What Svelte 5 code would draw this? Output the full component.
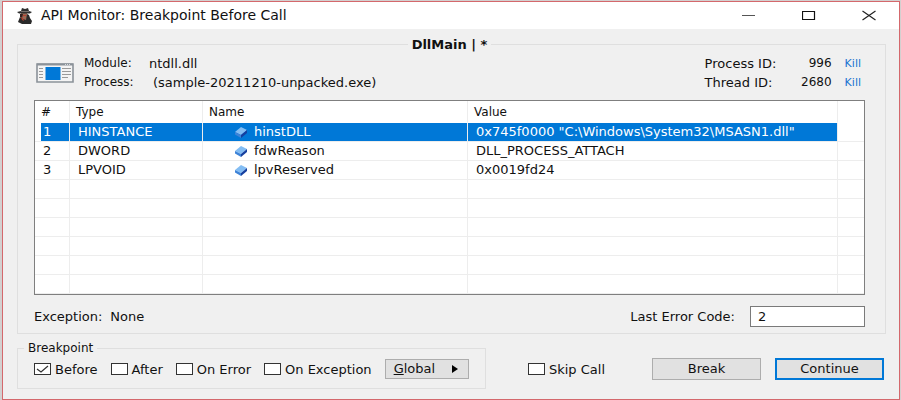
<script>
  const rows = [
    { type: 'HINSTANCE', name: 'hinstDLL', value: '0x745f0000 "C:\\Windows\\System32\\MSASN1.dll"' },
    { type: 'DWORD', name: 'fdwReason', value: 'DLL_PROCESS_ATTACH' },
    { type: 'LPVOID', name: 'lpvReserved', value: '0x0019fd24' }
  ];
  const blanks = Array(6).fill(0);
  let selected = $state(0);
  let points = $state([
    { label: 'Before', on: true },
    { label: 'After', on: false },
    { label: 'On Error', on: false },
    { label: 'On Exception', on: false }
  ]);
  let skip = $state(false);
  let code = $state('2');
</script>

<div class="desktop">
  <div class="window">
    <header>
      <svg class="agent" width="16" height="16" viewBox="0 0 16 16" aria-hidden="true">
        <path d="M4 5h6l1 4-2 4-5-2z" fill="#9a6a55" />
        <path d="M3 6l3 0-1 4-2-1z" fill="#33211f" />
        <path d="M0 4l4-1 1-3 3 1 3-1 1 3 3 1-2 1.500H2z" fill="#303030" />
        <path d="M4 3h8v1H4z" fill="#77716d" />
        <path d="M3 9l3 2 3 1 1-6 2 1 1 3 2 3-1 3H5l-4-2z" fill="#2a2a2a" />
        <path d="M4 9l2 1 1 3-2-1zM6 7h3v1H6z" fill="#b5402f" />
      </svg>
      <h1>API Monitor: Breakpoint Before Call</h1>
      <div class="controls">
        <button aria-label="Minimize"><svg width="14" height="12" viewBox="0 0 14 12"><path d="M0 5.500h13" stroke="#555" /></svg></button>
        <button aria-label="Maximize"><svg width="14" height="12" viewBox="0 0 14 12"><path d="M.5 1.500h12v8H.5z" fill="none" stroke="#111" stroke-width="1.200" /></svg></button>
        <button aria-label="Close"><svg width="14" height="12" viewBox="0 0 14 12"><path d="M.5 1l13 9M13.500 1l-13 9" fill="none" stroke="#222" stroke-width="1.200" /></svg></button>
      </div>
    </header>

    <main>
      <fieldset class="call">
        <legend>DllMain | *</legend>
        <div class="info">
          <svg width="38" height="20" viewBox="0 0 38 20" aria-hidden="true">
            <path d="M1 1h36v18H1z" fill="#f4f4f4" stroke="#8b9299" stroke-width="1.600" />
            <path d="M1 1.500h36" stroke="#8b9299" stroke-width="2" />
            <path d="M29 1.500h6" stroke="#d8dcdf" stroke-dasharray="1 1" />
            <path d="M9.500 4h15v13h-15z" fill="#0078d7" />
            <path d="M3 5.500h4M3 8.500h4M3 11.500h4M3 14.500h4M26 5.500h9M26 8.500h9M26 11.500h9M26 14.500h6" stroke="#9a9a9a" />
          </svg>
          <dl class="source">
            <dt>Module:</dt><dd>ntdll.dll</dd>
            <dt>Process:</dt><dd class="inset">(sample-20211210-unpacked.exe)</dd>
          </dl>
          <dl class="ids">
            <dt>Process ID:</dt><dd>996</dd><dd><a href="#process">Kill</a></dd>
            <dt>Thread ID:</dt><dd>2680</dd><dd><a href="#thread">Kill</a></dd>
          </dl>
        </div>

        <div class="list">
          <table>
            <colgroup><col class="c-num" /><col class="c-type" /><col class="c-name" /><col /><col class="c-end" /></colgroup>
            <thead>
              <tr><th>#</th><th>Type</th><th>Name</th><th>Value</th><th></th></tr>
            </thead>
            <tbody>
              {#each rows as row, i}
                <tr class:selected={i === selected} onclick={() => (selected = i)}>
                  <td>{i + 1}</td>
                  <td>{row.type}</td>
                  <td class="name">
                    <div>
                      <svg width="12" height="12" viewBox="0 0 12 12" aria-hidden="true">
                        <path d="M0 6l6-5 6 3-6 5z" fill="#83bdf3" />
                        <path d="M0 6l6 3v3L0 8.500z" fill="#3d83d8" />
                        <path d="M6 9l6-5v3l-6 5z" fill="#153f9f" />
                      </svg>
                      {row.name}
                    </div>
                  </td>
                  <td>{row.value}</td>
                  <td></td>
                </tr>
              {/each}
              {#each blanks as _}
                <tr><td></td><td></td><td></td><td></td><td></td></tr>
              {/each}
            </tbody>
          </table>
        </div>

        <div class="status">
          <span>Exception:</span><span>None</span>
          <label for="code">Last Error Code:</label>
          <input id="code" type="text" bind:value={code} />
        </div>
      </fieldset>

      <div class="footer">
        <fieldset class="points">
          <legend>Breakpoint</legend>
          <div class="checks">
            {#each points as point}
              <label><input type="checkbox" bind:checked={point.on} />{point.label}</label>
            {/each}
            <button class="push global"><span><u>G</u>lobal</span>
              <svg width="6" height="8" viewBox="0 0 6 8" aria-hidden="true"><path d="M0 0l6 4-6 4z" /></svg>
            </button>
          </div>
        </fieldset>
        <div class="actions">
          <label><input type="checkbox" bind:checked={skip} />Skip Call</label>
          <button class="push wide">Break</button>
          <button class="push wide primary">Continue</button>
        </div>
      </div>
    </main>
  </div>
</div>

<style>
  .desktop {
    box-sizing: border-box;
    padding: 1px 1px 0 2px;
    background: #d3d0d0;
    font: 13px/19px "DejaVu Sans", sans-serif;
    color: #111;
  }
  .window {
    border: 1px solid #d4686c;
    background: #f0f0f0;
  }
  header {
    display: flex;
    align-items: center;
    height: 27px;
    padding-left: 14px;
    background: #fff;
  }
  h1 {
    flex: 1;
    margin: 0 0 0 8px;
    font-size: 14px;
    font-weight: 400;
  }
  .controls {
    display: flex;
  }
  .controls button {
    display: flex;
    align-items: center;
    justify-content: center;
    width: 60px;
    height: 27px;
    padding: 0;
    border: 0;
    background: none;
  }
  main {
    padding: 6px 13px 10px 14px;
  }
  fieldset {
    min-width: 0;
    margin: 0;
    padding: 0;
    border: 1px solid #dfdfdf;
  }
  legend {
    padding: 0 4px;
    font-size: 12px;
  }
  .call legend {
    margin: 0 auto;
    font-size: 13px;
    font-weight: 700;
  }
  .call {
    padding: 0 20px 6px 16px;
  }
  .info {
    display: flex;
    align-items: center;
    height: 38px;
    margin-bottom: 8px;
    padding-left: 2px;
  }
  dl {
    display: grid;
    margin: 0;
  }
  dt {
    font-size: 12px;
  }
  dd {
    margin: 0;
  }
  .source {
    grid-template-columns: 65px auto;
    margin-left: 10px;
  }
  .source .inset {
    padding-left: 4px;
  }
  .ids {
    grid-template-columns: 88px 39px auto;
    margin-left: auto;
    padding-right: 4px;
  }
  .ids dt {
    font-size: 13px;
  }
  .ids dd {
    font-size: 12px;
    text-align: right;
  }
  .ids dd + dd {
    padding-left: 13px;
    font-size: 11px;
  }
  a {
    color: #1a73d0;
    text-decoration: none;
  }
  .list {
    border: 1px solid #7f7f7f;
    background: #fff;
  }
  table {
    width: 100%;
    border-collapse: separate;
    border-spacing: 0;
    table-layout: fixed;
  }
  .c-num {
    width: 35px;
  }
  .c-type {
    width: 133px;
  }
  .c-name {
    width: 265px;
  }
  .c-end {
    width: 26px;
  }
  th,
  td {
    box-sizing: border-box;
    height: 19px;
    padding: 0 0 0 8px;
    border-right: 1px solid #ededed;
    border-bottom: 1px solid #ededed;
    line-height: 18px;
    text-align: left;
    font-weight: 400;
    white-space: nowrap;
  }
  th {
    height: 22px;
    padding-left: 6px;
    border-bottom-color: #fff;
    font-size: 12px;
  }
  th:last-child,
  td:last-child {
    border-right: 0;
  }
  .name {
    padding-left: 32px;
  }
  .name div {
    display: flex;
    align-items: center;
    gap: 7px;
  }
  .selected td:not(:last-child) {
    background: #0078d7;
    color: #fff;
  }
  .selected td:first-child {
    box-shadow: inset 6px 0 #fff;
  }
  .status {
    display: flex;
    align-items: center;
    gap: 8px;
    height: 21px;
    margin-top: 11px;
  }
  .status label {
    margin-left: auto;
  }
  .status input {
    box-sizing: border-box;
    width: 115px;
    height: 21px;
    margin-left: 7px;
    padding: 0 7px;
    border: 1px solid #7a7a7a;
    background: #fff;
    color: inherit;
    font: inherit;
  }
  .footer {
    display: flex;
    align-items: center;
    margin-top: 5px;
  }
  .points legend {
    margin-left: 6px;
  }
  .checks {
    display: flex;
    align-items: center;
    gap: 13px;
    padding: 1px 16px 9px 16px;
  }
  .footer label {
    display: flex;
    align-items: center;
    gap: 4px;
    white-space: nowrap;
  }
  input[type="checkbox"] {
    box-sizing: border-box;
    width: 17px;
    height: 12px;
    margin: 0;
    appearance: none;
    border: 1px solid #333;
    background: #fff;
  }
  input[type="checkbox"]:checked {
    background: #fff url("data:image/svg+xml,%3Csvg xmlns='http://www.w3.org/2000/svg' viewBox='0 0 15 10'%3E%3Cpath d='M2 5l4 3 7-6' fill='none' stroke='%23333' stroke-width='1.200'/%3E%3C/svg%3E") center / 15px 10px no-repeat;
  }
  .push {
    box-sizing: border-box;
    height: 22px;
    padding: 0;
    border: 1px solid #adadad;
    background: #e1e1e1;
    color: inherit;
    font: inherit;
    line-height: 18px;
  }
  .global {
    display: flex;
    align-items: center;
    justify-content: space-between;
    width: 84px;
    height: 20px;
    padding: 0 10px 0 8px;
  }
  .wide {
    width: 109px;
  }
  .primary {
    border: 2px solid #0078d7;
  }
  .actions {
    display: flex;
    align-items: center;
    gap: 14px;
    margin: 10px 2px 0 auto;
  }
  .actions label {
    margin-right: 33px;
  }
</style>
